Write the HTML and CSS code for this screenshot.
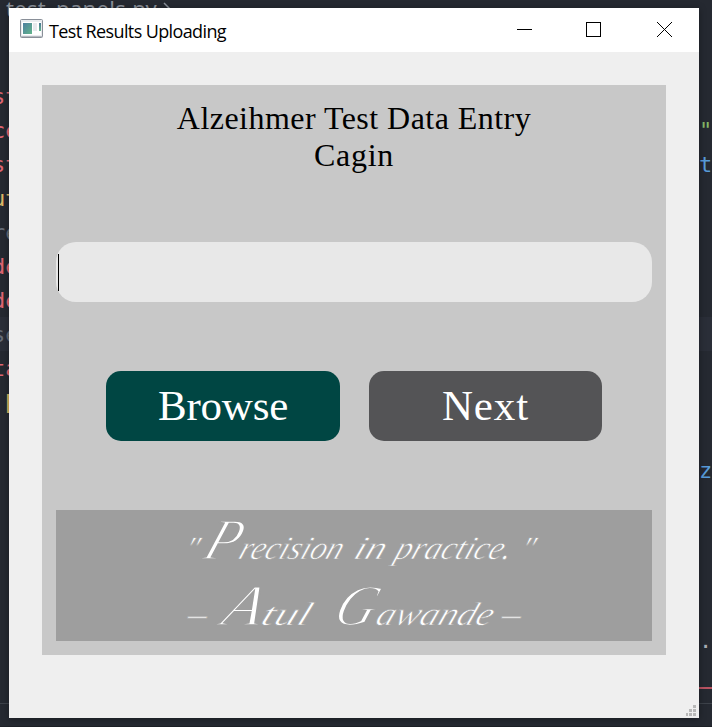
FILE: index.html
```html
<!DOCTYPE html>
<html lang="en">
<head>
<meta charset="utf-8">
<title>Test Results Uploading</title>
<link rel="stylesheet" href="styles.css">
</head>
<body>
<div class="editor">
  <div class="crumb">test_panels.py <svg width="10" height="18" viewBox="0 0 10 18"><path d="M1 1l8 8-8 8" fill="none" stroke="currentColor" stroke-width="1.5"/></svg></div>
  <div class="line"></div>
  <div class="line"></div>
  <div class="line"><span class="red">st</span></div>
  <div class="line"><span class="red">ce</span><b class="green">"</b></div>
  <div class="line"><span class="red">st</span><b class="blue">t</b></div>
  <div class="line"><span class="yellow">ut</span></div>
  <div class="line"><span class="gray">re</span></div>
  <div class="line"><span class="red">de</span></div>
  <div class="line"><span class="red">de</span></div>
  <div class="line current"><span class="gray">se</span></div>
  <div class="line"><span class="red">ta</span></div>
  <div class="line"><span class="yellow bracket">[</span></div>
  <div class="line"></div>
  <div class="line"><span></span><b class="blue">z</b></div>
  <div class="line"></div>
  <div class="line"></div>
  <div class="line"></div>
  <div class="line"></div>
  <div class="line"><span></span><b class="dot">.</b></div>
  <div class="underline"></div>
  <div class="panel"></div>
</div>

<main class="window">
  <header class="titlebar">
    <svg class="app-icon" width="23" height="19" viewBox="0 0 23 19">
      <defs>
        <linearGradient id="screen" x1="0" y1="0" x2="1" y2="1"><stop offset="0" stop-color="#4d7fa0"/><stop offset="1" stop-color="#62b58b"/></linearGradient>
        <linearGradient id="strip" x1="0" y1="0" x2="0" y2="1"><stop offset="0" stop-color="#4b7795"/><stop offset="1" stop-color="#62b58b"/></linearGradient>
      </defs>
      <rect x=".5" y=".5" width="22" height="18" rx="1" fill="#e9ecef" stroke="#898f98"/>
      <path d="M1 17.5h21" stroke="#b5bac0"/>
      <rect x="2" y="3" width="19" height="13" fill="#fff"/>
      <rect x="3" y="4" width="9" height="11" fill="url(#screen)"/>
      <rect x="13" y="4" width="4" height="8" fill="#e6e9ed"/>
      <rect x="19" y="4" width="2" height="8" fill="url(#strip)"/>
    </svg>
    <h1 class="caption">Test Results Uploading</h1>
    <svg class="controls" width="157" height="17" viewBox="0 0 157 17" fill="none" stroke="#000" shape-rendering="crispEdges">
      <path d="M1 8.5h15"/>
      <rect x="70.5" y="1.5" width="14" height="14"/>
      <path d="M141 1l15 15M156 1l-15 15" shape-rendering="auto"/>
    </svg>
  </header>
  <section class="card">
    <h2 class="heading"><span class="heading-main">Alzeihmer Test Data Entry</span><span class="heading-name">Cagin</span></h2>
    <div class="field"><span class="caret"></span></div>
    <div class="actions">
      <button class="button browse"><span>Browse</span></button>
      <button class="button next"><span>Next</span></button>
    </div>
    <blockquote class="quote">
      <svg width="596" height="131" viewBox="0 0 596 131">
        <g class="script" transform="translate(0 49) skewX(-20)">
          <text x="125" y="0">"</text>
          <text class="capital" x="145" y="0" textLength="34" lengthAdjust="spacingAndGlyphs">P</text>
          <text x="181" y="0" textLength="103" lengthAdjust="spacingAndGlyphs">recision</text>
          <text x="296" y="0" textLength="31" lengthAdjust="spacingAndGlyphs">in</text>
          <text x="337" y="0" textLength="116" lengthAdjust="spacingAndGlyphs">practice.</text>
          <text x="461" y="0">"</text>
        </g>
        <g class="script" transform="translate(0 115) skewX(-20)">
          <text x="129" y="0" textLength="19" lengthAdjust="spacingAndGlyphs">–</text>
          <text class="capital" x="163" y="0" textLength="39" lengthAdjust="spacingAndGlyphs">A</text>
          <text x="203" y="0" textLength="49" lengthAdjust="spacingAndGlyphs">tul</text>
          <text class="capital" x="275" y="0" textLength="40" lengthAdjust="spacingAndGlyphs">G</text>
          <text x="318" y="0" textLength="116" lengthAdjust="spacingAndGlyphs">awande</text>
          <text x="443" y="0" textLength="19" lengthAdjust="spacingAndGlyphs">–</text>
        </g>
      </svg>
    </blockquote>
  </section>
  <svg class="grip" width="10" height="11" viewBox="0 0 10 11" fill="#b8b8b8" shape-rendering="crispEdges"><path d="M7 0h3v3h-3zM3 4h3v3h-3zM7 4h3v3h-3zM0 8h2v3h-2zM3 8h3v3h-3zM7 8h3v3h-3z"/></svg>
</main>
</body>
</html>
```

FILE: styles.css
```css
* { box-sizing: border-box; }
body {
  position: relative;
  width: 712px;
  height: 727px;
  margin: 0;
  overflow: hidden;
  background: #252931;
}
.editor {
  height: 727px;
  overflow: hidden;
  font: 22px/35px "DejaVu Sans Mono", monospace;
}
.crumb {
  height: 11px;
  padding-left: 6px;
  color: #8b919b;
  font: 22px/17px "Noto Sans", sans-serif;
  letter-spacing: .3px;
  white-space: nowrap;
}
.crumb svg { vertical-align: -3px; }
.line {
  display: flex;
  justify-content: space-between;
  height: 34px;
}
.line span { margin-left: -8px; }
.line b { width: 13px; font-weight: normal; }
.line .bracket { margin-left: 2px; }
.current { background: #2a2e38; }
.red { color: #df6571; }
.yellow { color: #ddb967; }
.gray { color: #666d78; }
.green { color: #85b967; }
.blue { color: #589cda; }
.dot { color: #a9adb5; }
.underline {
  width: 13px;
  height: 2px;
  margin: 30px 0 14px auto;
  background: #b95362;
}
.panel {
  height: 24px;
  border-top: 1px solid #3d424a;
  border-bottom: 1px solid #1c2026;
}
.window {
  position: absolute;
  left: 9px;
  top: 8px;
  width: 690px;
  height: 710px;
  background: #efefef;
  box-shadow: 0 1px 7px rgba(0, 0, 0, .35);
}
.titlebar {
  display: flex;
  align-items: center;
  height: 44px;
  padding: 0 26px 0 11px;
  background: #fff;
}
.app-icon { margin-bottom: 3px; }
.caption {
  margin: 1px auto 0 6px;
  font: 18px/24px "Open Sans", "Noto Sans", sans-serif;
  letter-spacing: -.62px;
  white-space: nowrap;
}
.controls { margin-bottom: 1px; }
.card {
  width: 624px;
  height: 570px;
  margin: 33px 0 0 33px;
  padding: 14px;
  background: #c8c8c8;
}
.heading {
  display: flex;
  flex-direction: column;
  align-items: center;
  height: 143px;
  margin: 0;
  padding-top: 1px;
  font: 32px/37px "Palatino Linotype", Palatino, "Liberation Serif", serif;
}
.heading span { white-space: nowrap; }
.heading-main { letter-spacing: .46px; }
.heading-name { letter-spacing: .7px; }
.field {
  display: flex;
  align-items: center;
  height: 60px;
  padding-left: 2px;
  border-radius: 20px;
  background: #e8e8e8;
}
.caret { width: 1px; height: 37px; background: #000; }
.actions {
  display: flex;
  gap: 29px;
  margin: 69px 50px;
}
.button {
  width: 234px;
  height: 70px;
  padding: 0;
  border: 0;
  border-radius: 15px;
  color: #fff;
  font: 43px/70px "Palatino Linotype", Palatino, "Liberation Serif", serif;
}
.browse { background: #004643; letter-spacing: -.2px; }
.next { width: 233px; background: #545456; letter-spacing: .9px; }
.quote {
  height: 131px;
  margin: 0;
  background: #9e9e9e;
}
.quote svg { display: block; }
.script {
  fill: #fff;
  stroke: #9e9e9e;
  stroke-width: .6px;
  font: italic 33px "Liberation Serif", serif;
}
.capital { font-size: 58px; stroke-width: 1.6px; }
.grip {
  position: absolute;
  right: 3px;
  bottom: 2px;
}
```
